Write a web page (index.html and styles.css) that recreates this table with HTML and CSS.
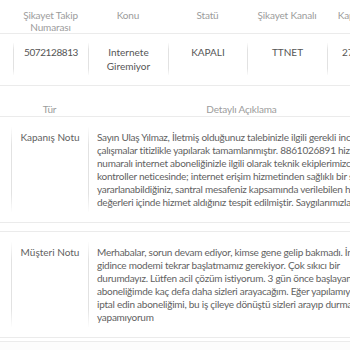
FILE: index.html
```html
<!DOCTYPE html>
<html lang="tr">
<head>
<meta charset="utf-8">
<title>Şikayet Detayı</title>
<link rel="stylesheet" href="styles.css">
</head>
<body>
<section class="summary">
  <div class="sum-row sum-head">
    <div class="hcell">Şikayet Takip Numarası</div>
    <div class="hcell">Konu</div>
    <div class="hcell">Statü</div>
    <div class="hcell">Şikayet Kanalı</div>
    <div class="hcell">Kapanış Tarihi</div>
  </div>
  <div class="sum-row sum-data">
    <div class="cell num">5072128813</div>
    <div class="cell">Internete Giremiyor</div>
    <div class="cell">KAPALI</div>
    <div class="cell">TTNET</div>
    <div class="cell">27.01.2021</div>
  </div>
</section>

<section class="notes">
  <div class="note-row note-head">
    <div class="hcell">Tür</div>
    <div class="hcell">Detaylı Açıklama</div>
  </div>
  <div class="note-row note-item">
    <div class="cell type">Kapanış Notu</div>
    <div class="cell desc">Sayın Ulaş Yılmaz, İletmiş olduğunuz talebinizle ilgili gerekli incelemeler ve<br>çalışmalar titizlikle yapılarak tamamlanmıştır. 8861026891 hizmet<br>numaralı internet aboneliğinizle ilgili olarak teknik ekiplerimizce yapılan<br>kontroller neticesinde; internet erişim hizmetinden sağlıklı bir şekilde<br>yararlanabildiğiniz, santral mesafeniz kapsamında verilebilen hız<br>değerleri içinde hizmet aldığınız tespit edilmiştir. Saygılarımızla.</div>
  </div>
  <div class="note-row note-item second">
    <div class="cell type">Müşteri Notu</div>
    <div class="cell desc">Merhabalar, sorun devam ediyor, kimse gene gelip bakmadı. İnternete<br>gidince modemi tekrar başlatmamız gerekiyor. Çok sıkıcı bir<br>durumdayız. Lütfen acil çözüm istiyorum. 3 gün önce başlayan<br>aboneliğimde kaç defa daha sizleri arayacağım. Eğer yapılamıyorsa<br>iptal edin aboneliğimi, bu iş çileye dönüştü sizleri arayıp durmaktan<br>yapamıyorum</div>
  </div>
  <div class="note-foot"></div>
</section>
</body>
</html>
```
FILE: styles.css
```css
html, body {
  margin: 0;
  padding: 0;
  overflow: hidden;
  background: #fff;
}
body {
  font-family: Lato, "Open Sans", sans-serif;
  font-size: 10px;
  color: #5f5f5f;
}

.hcell {
  color: #9c9c9c;
  text-align: center;
  letter-spacing: -0.15px;
}

.cell {
  border-left: 1px solid;
  border-image: linear-gradient(to bottom, rgba(225,225,225,0), #e2e2e2 22%, #e2e2e2 78%, rgba(225,225,225,0)) 1;
}

/* summary table */
.sum-row {
  display: grid;
  grid-template-columns: 75px 80px 79px 80px 80px;
  padding-left: 13px;
  border-bottom: 1px solid #ebebeb;
}
.sum-head {
  padding-top: 10px;
  line-height: 11.5px;
}
.sum-head .hcell {
  padding: 0 4px;
}
.sum-data {
  padding-top: 9px;
  padding-bottom: 10px;
  line-height: 14px;
}
.sum-data .cell {
  padding: 2px 6px;
  text-align: center;
  color: #555;
}
.sum-data .num {
  letter-spacing: -0.4px;
}

/* notes table */
.notes {
  margin-top: 17px;
}
.note-row {
  display: grid;
  grid-template-columns: 77px 307px;
  padding-left: 11px;
  border-bottom: 1px solid #ebebeb;
}
.note-head {
  line-height: 12px;
  padding-bottom: 1px;
}
.note-item {
  padding-top: 10px;
  padding-bottom: 10px;
  line-height: 13px;
}
.note-item .cell {
  padding: 3.5px 8px;
  white-space: nowrap;
  color: #626262;
}
.note-item .desc {
  letter-spacing: -0.25px;
}
.note-item .type {
  text-align: center;
}
.note-item.second {
  margin-top: 8px;
  border-top: 1px solid #ebebeb;
}
.note-foot {
  margin-top: 3px;
  height: 12px;
  border-top: 1px solid #ebebeb;
  background: #fcfcfc;
}
```
